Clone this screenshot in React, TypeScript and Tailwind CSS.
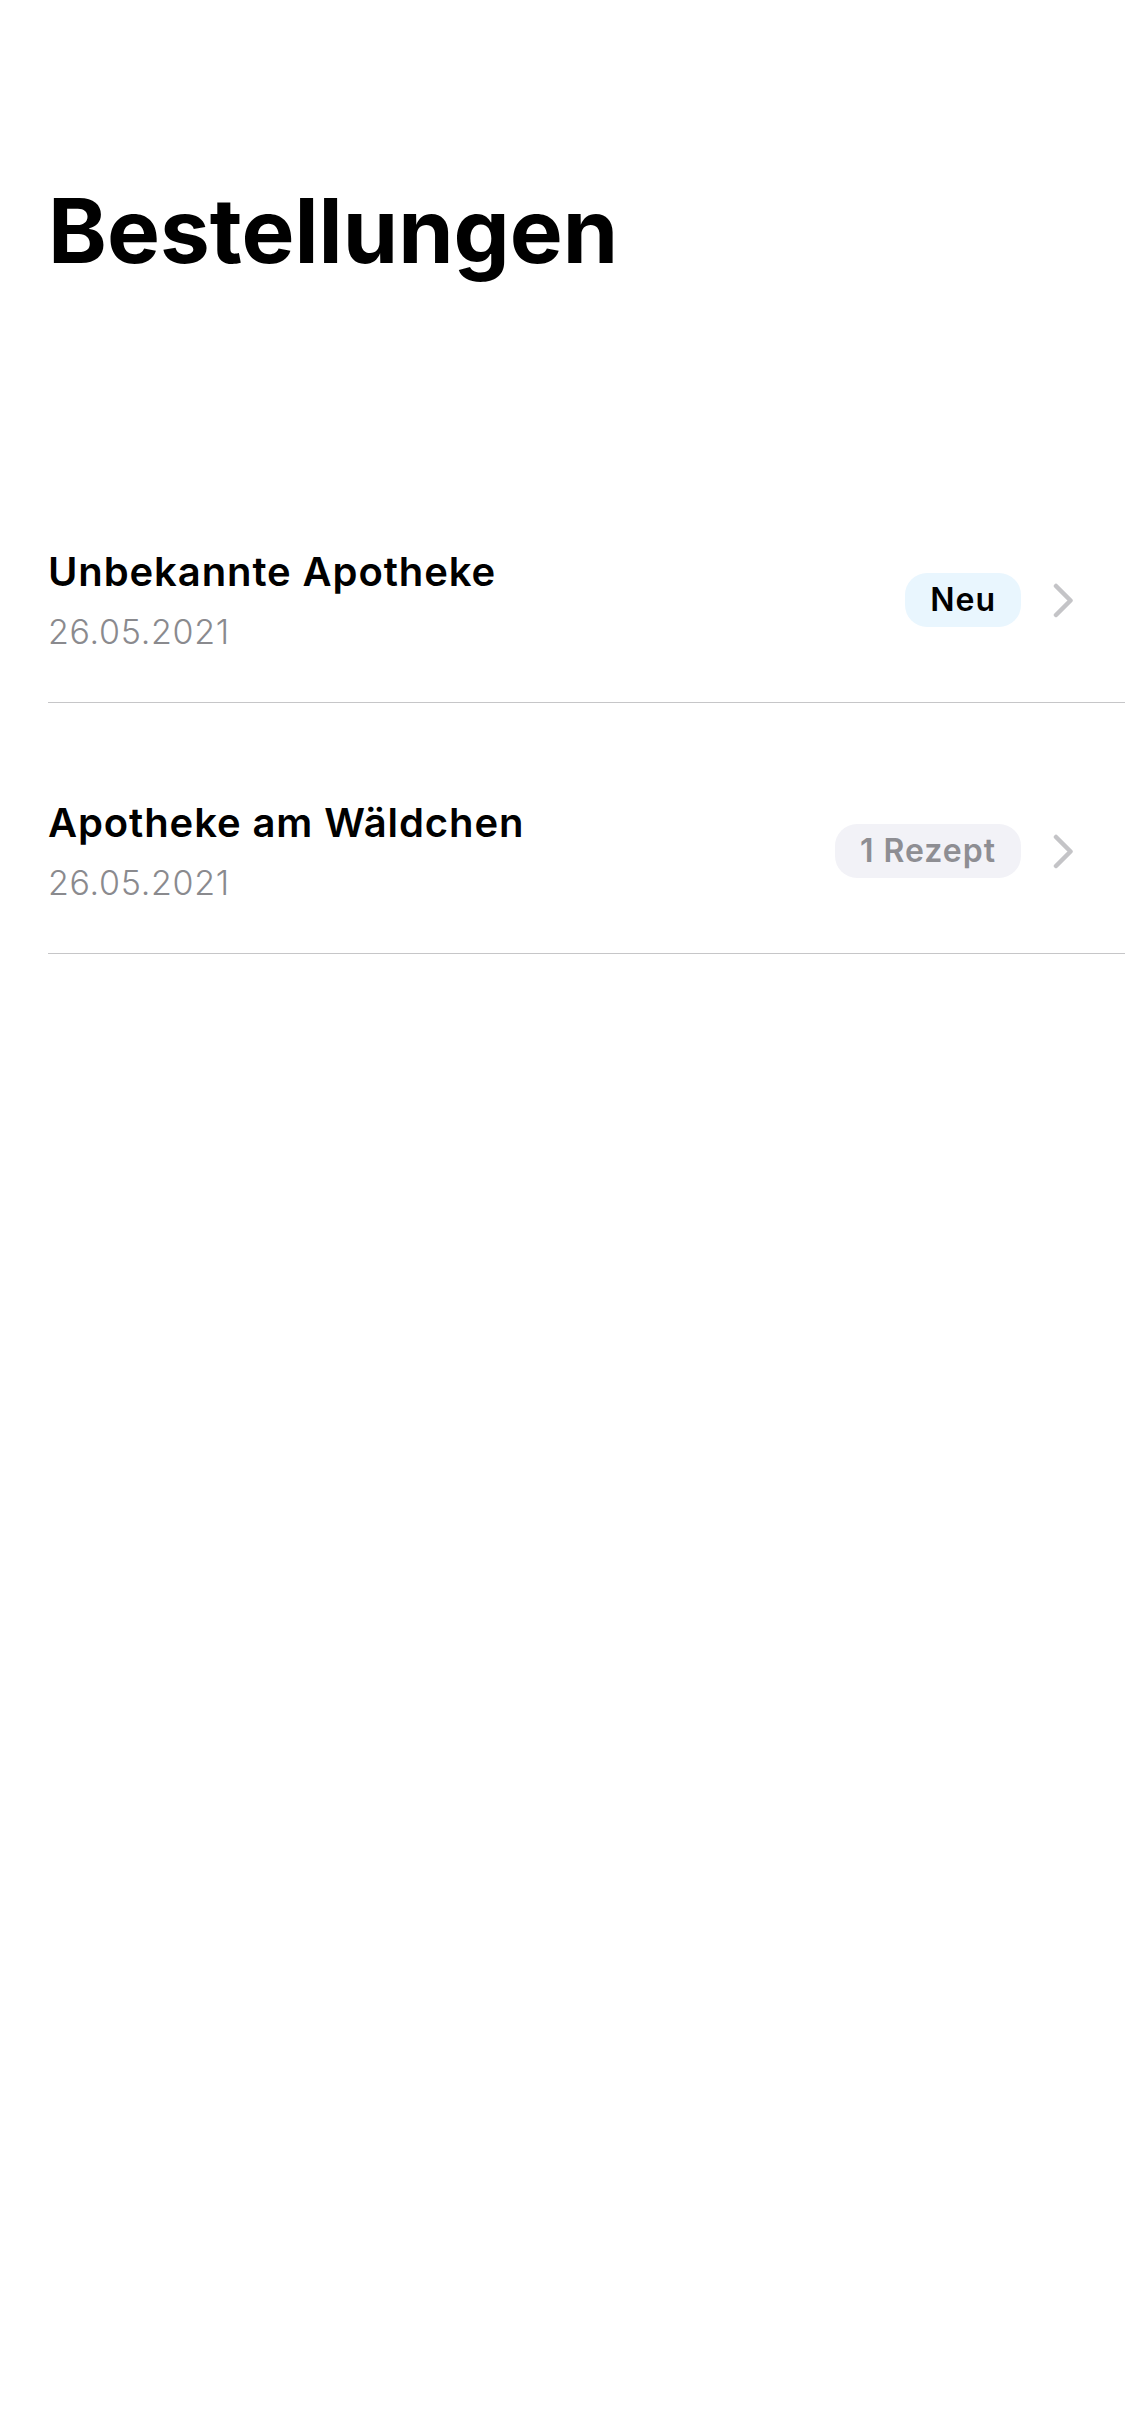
import React from 'react';

// Orders list (iOS style)
type Order = { name: string; date: string; badge: string; tone: 'new' | 'muted' };

const orders: Order[] = [
    { name: 'Unbekannte Apotheke', date: '26.05.2021', badge: 'Neu', tone: 'new' },
    { name: 'Apotheke am Wäldchen', date: '26.05.2021', badge: '1 Rezept', tone: 'muted' },
];

const Chevron: React.FC = () => (
    <svg width="21" height="35" viewBox="0 0 21 35" fill="none" className="shrink-0">
        <path d="M3 3 L17.5 17.5 L3 32" stroke="#c4c4c7" strokeWidth="4.5" strokeLinecap="round" strokeLinejoin="round" />
    </svg>
);

const OrderRow: React.FC<{ order: Order }> = ({ order }) => (
    <div className="ml-12 flex items-center border-b border-[#c6c6c8] pt-[96px] pb-[50px] pr-[51px]">
        <div className="flex-1 min-w-0">
            <p className="text-[40px] leading-[48px] font-semibold text-black tracking-[0.9px]">{order.name}</p>
            <p className="mt-[16px] text-[34px] leading-[40px] font-light text-[#8a8a8e] tracking-[0.7px]">{order.date}</p>
        </div>
        <span
            className={
                order.tone === 'new'
                    ? 'h-[54px] px-[25px] rounded-[22px] bg-[#e9f6fe] text-black text-[32px] font-semibold tracking-[1px] flex items-center'
                    : 'h-[54px] px-[25px] rounded-[22px] bg-[#f2f2f7] text-[#8e8e93] text-[32px] font-semibold tracking-[1px] flex items-center'
            }
        >
            {order.badge}
        </span>
        <div className="ml-[32px]">
            <Chevron />
        </div>
    </div>
);

export default function App() {
    return (
        <div className="min-h-screen bg-white font-['Inter',sans-serif] pt-[186px]">
            <h1 className="px-12 text-[89px] leading-[89px] font-bold text-black">Bestellungen</h1>
            <div className="mt-[177px]">
                {orders.map(o => (
                    <OrderRow key={o.name} order={o} />
                ))}
            </div>
        </div>
    );
}
